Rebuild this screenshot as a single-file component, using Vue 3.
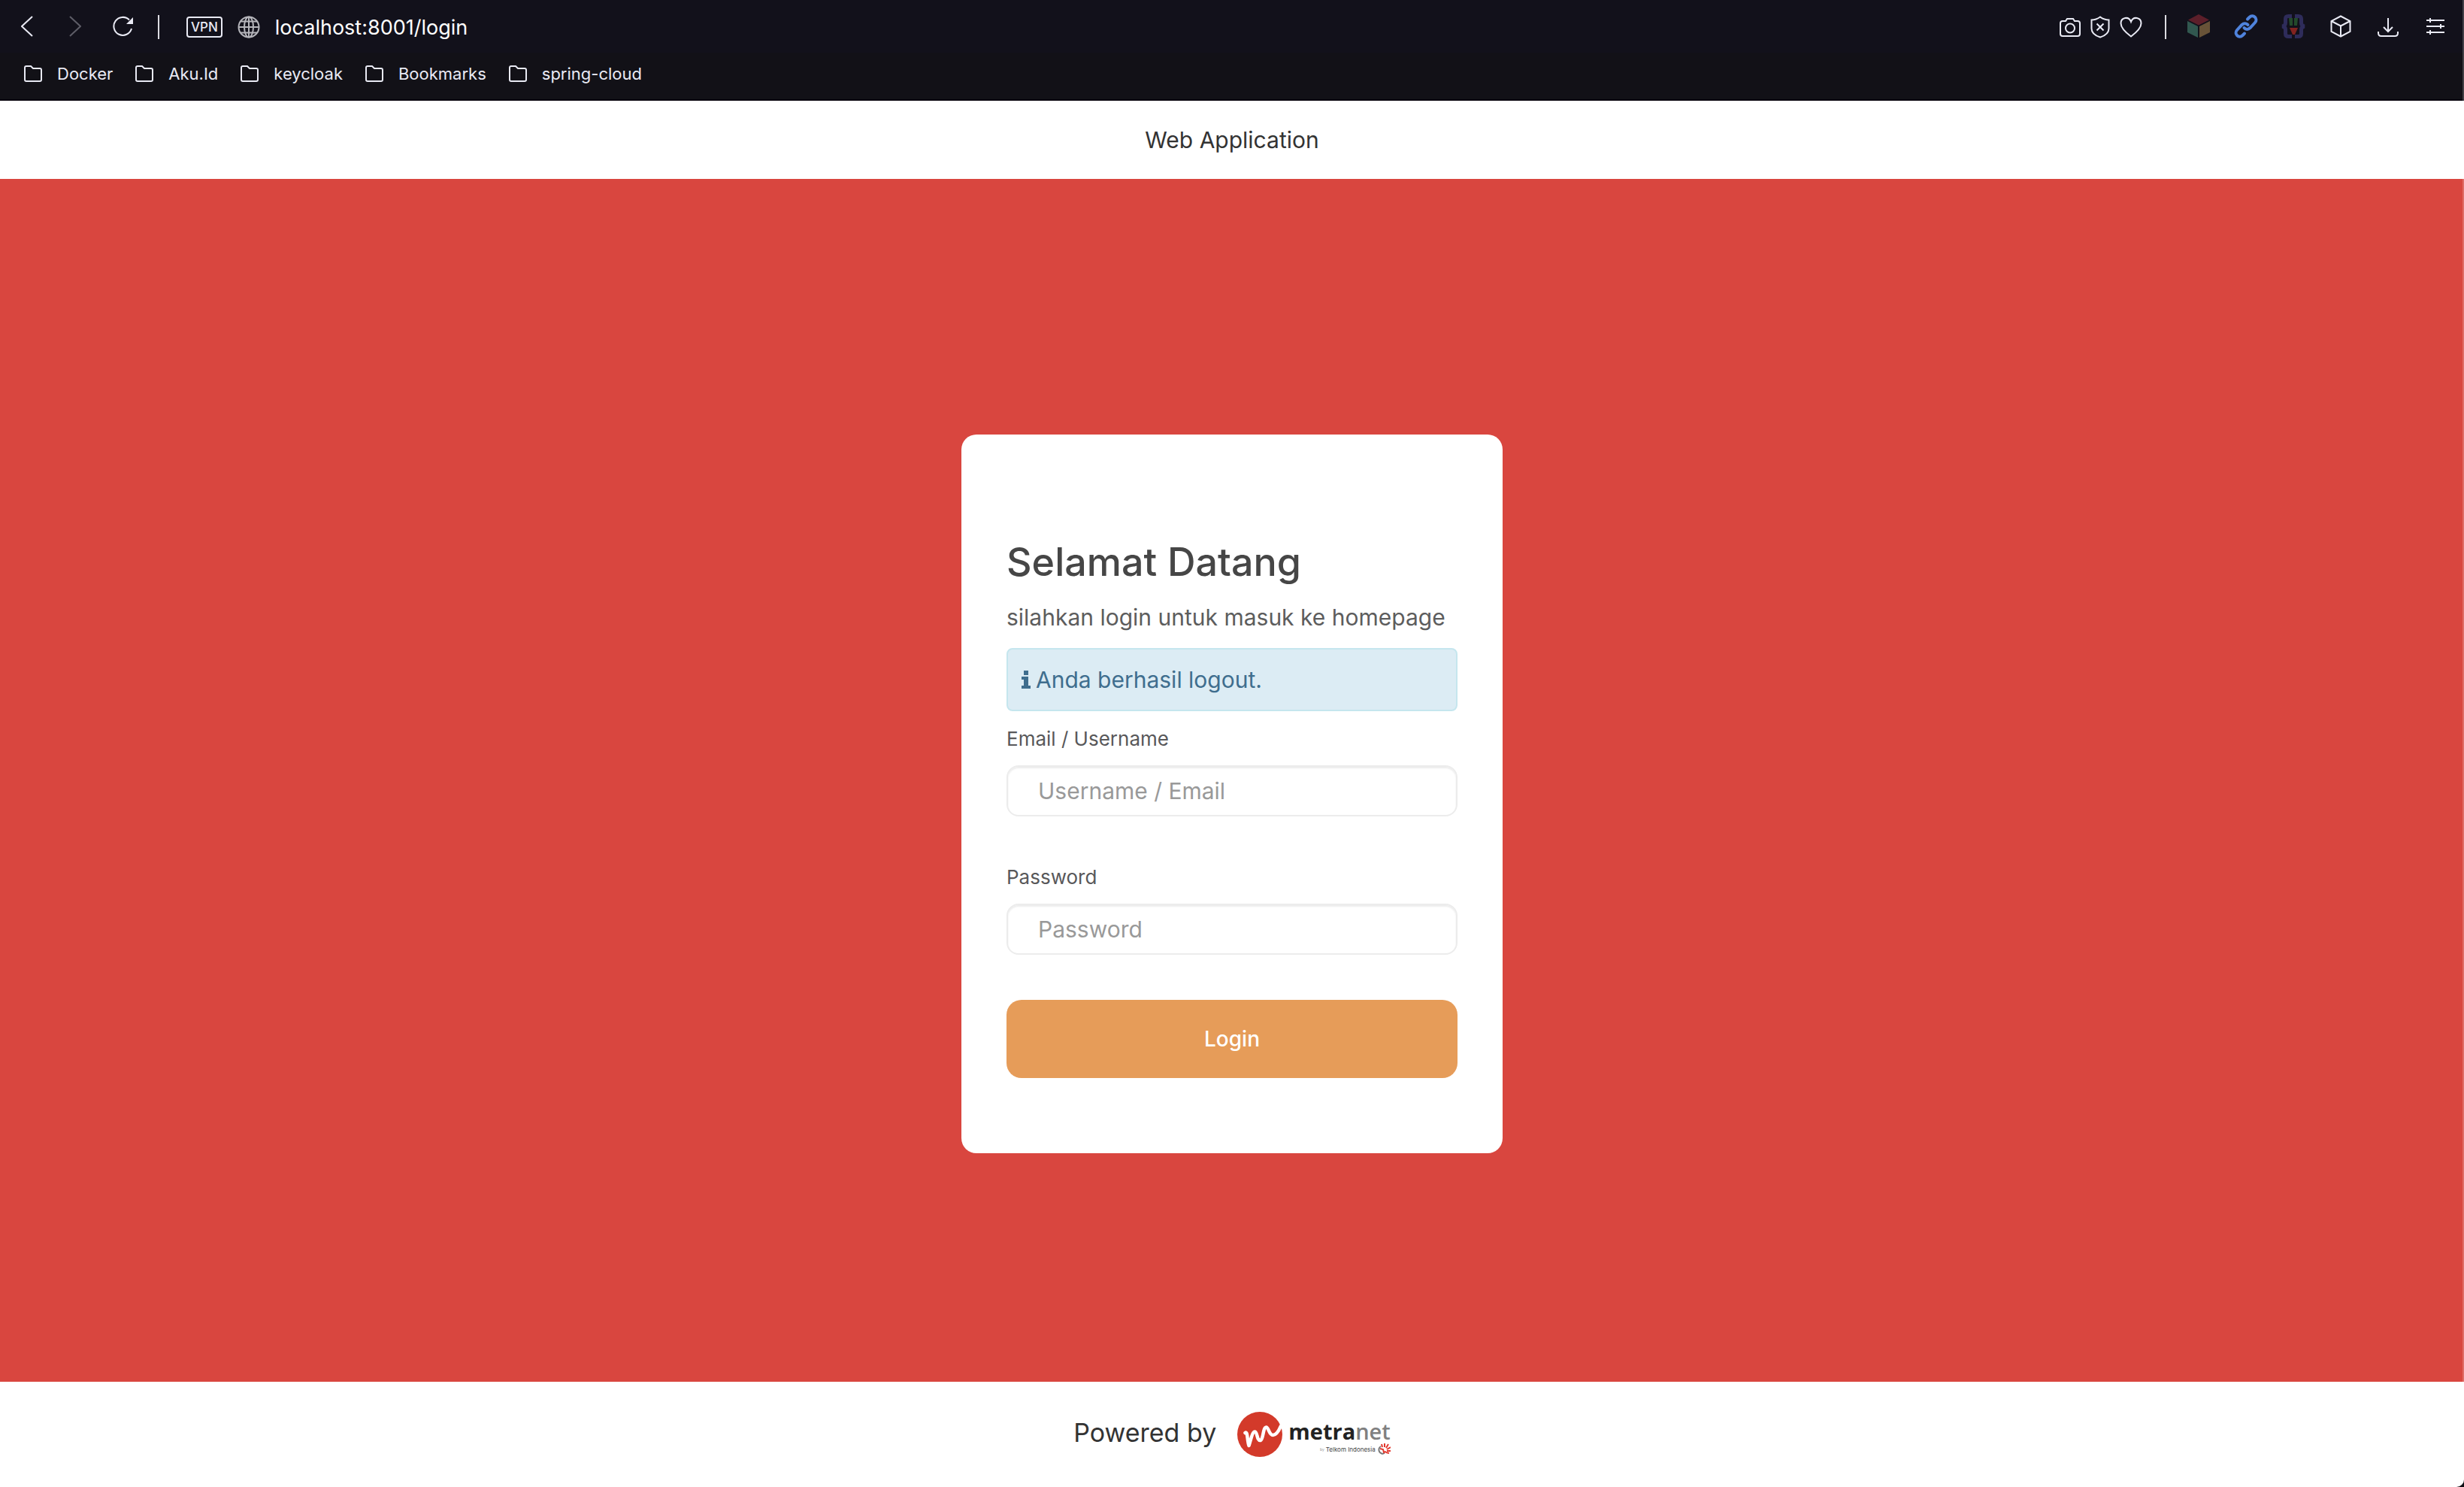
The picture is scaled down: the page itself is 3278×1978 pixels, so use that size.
<script setup>
import { ref } from 'vue'

const bookmarks = ['Docker', 'Aku.Id', 'keycloak', 'Bookmarks', 'spring-cloud']
const url = ref('localhost:8001/login')
const username = ref('')
const password = ref('')
</script>

<template>
  <div class="window">
    <div class="browser">
      <div class="toolbar">
        <div class="nav">
          <button class="icon-btn" aria-label="Back">
            <svg width="16" height="28" viewBox="0 0 16 28"><path d="M15 1L1 14l14 13" /></svg>
          </button>
          <button class="icon-btn dim" aria-label="Forward">
            <svg width="16" height="28" viewBox="0 0 16 28"><path d="M1 1l14 13L1 27" /></svg>
          </button>
          <button class="icon-btn" aria-label="Reload">
            <svg width="28" height="28" viewBox="0 0 28 28"><path d="M25 17A12 12 0 1 1 22 5.500" /><path class="solid" d="M27 2v9h-9z" /></svg>
          </button>
        </div>
        <span class="divider"></span>
        <span class="vpn">VPN</span>
        <svg class="globe" width="30" height="30" viewBox="0 0 30 30">
          <circle cx="15" cy="15" r="13.500" /><ellipse cx="15" cy="15" rx="6" ry="13.500" />
          <path d="M1.500 15h27M4 7.500h22M4 22.500h22M15 1.500v27" />
        </svg>
        <input v-model="url" class="url" type="text" aria-label="Address" />
        <div class="page-tools">
          <button class="icon-btn" aria-label="Snapshot">
            <svg width="28" height="26" viewBox="0 0 28 26"><path d="M4 5h4l2-3h8l2 3h4q3 0 3 3v14q0 3-3 3H4q-3 0-3-3V8q0-3 3-3z" /><circle cx="14" cy="14.500" r="6" /></svg>
          </button>
          <button class="icon-btn" aria-label="Ad blocker">
            <svg width="26" height="30" viewBox="0 0 26 30"><path d="M13 1.500C17 4.500 21 5.500 24.500 5.500V17c0 6-5 9.500-11.500 11.500C6.500 26.500 1.500 23 1.500 17V5.500C5 5.500 9 4.500 13 1.500zM8.500 10.500l9 9m0-9l-9 9" /></svg>
          </button>
          <button class="icon-btn" aria-label="Save page">
            <svg width="30" height="28" viewBox="0 0 30 28"><path d="M15 26.500C9 22 1.500 16 1.500 9c0-8 10.500-10 13.500-2 3-8 13.500-6 13.500 2 0 7-7.500 13-13.500 17.500z" /></svg>
          </button>
        </div>
        <span class="divider tools-divider"></span>
        <div class="extensions">
          <button class="icon-btn" aria-label="Color cube">
            <svg width="32" height="32" viewBox="0 0 32 32"><path fill="#5c1f2a" stroke="none" d="M16 0l14 7.500-14 7L2 7.500z" /><path fill="#31574f" stroke="none" d="M1 9l14 7v15L1 24z" /><path fill="#685338" stroke="none" d="M31 9l-14 7v15l14-7z" /></svg>
          </button>
          <button class="icon-btn" aria-label="Link">
            <svg class="link" width="32" height="32" viewBox="0 0 32 32"><path d="M18 6.500l2.500-2.500c5-5 12 2 7.500 7l-6.500 7c-2.500 2.500-6 2.500-8 0" /><path d="M14 25.500L11.500 28c-5 5-12-2-7.500-7l6.500-7c2.500-2.500 6-2.500 8 0" /></svg>
          </button>
          <button class="icon-btn" aria-label="JSON viewer">
            <svg width="32" height="32" viewBox="0 0 32 32"><path class="brace" d="M14 2.500H9.500Q5.500 2.500 5.500 6v5.500q0 4-4.500 4.500 4.500 .5 4.500 4.500V26q0 3.500 4 3.500H14M18 2.500h4.500q4 0 4 3.500v5.500q0 4 4.500 4.500-4.500 .5-4.500 4.500V26q0 3.500-4 3.500H18" /><path fill="#234a2b" stroke="none" d="M10 5h5v10h-4zM17 5h5l-1 10h-4z" /><path fill="#822320" stroke="none" d="M11 18h11l-4 9h-3z" /></svg>
          </button>
          <button class="icon-btn" aria-label="Extensions">
            <svg width="28" height="30" viewBox="0 0 28 30"><path d="M14 1.500l12.500 6.500v14L14 28.500 1.500 22V8zM1.500 8L14 14.500 26.500 8M14 14.500v14" /></svg>
          </button>
          <button class="icon-btn" aria-label="Downloads">
            <svg width="28" height="28" viewBox="0 0 28 28"><path d="M14 3v18M8 15l6 6 6-6M1 21v2q0 4 4 4h18q4 0 4-4v-2" /></svg>
          </button>
          <button class="icon-btn" aria-label="Easy setup">
            <svg width="26" height="26" viewBox="0 0 26 26"><path d="M1 5h24M1 13h24M1 21h24M6 2v6M20 10v6M6 18v6" /></svg>
          </button>
        </div>
      </div>
      <nav class="bookmarks">
        <a v-for="name in bookmarks" :key="name" href="#" class="bookmark">
          <svg width="24" height="22" viewBox="0 0 24 22"><path d="M3 1h6l3 3h9q2 0 2 2v13q0 2-2 2H3q-2 0-2-2V3q0-2 2-2z" /></svg>
          <span>{{ name }}</span>
        </a>
      </nav>
    </div>

    <header class="site-header">Web Application</header>

    <main class="main">
      <form class="card" @submit.prevent>
        <h1>Selamat Datang</h1>
        <p class="lead">silahkan login untuk masuk ke homepage</p>
        <div class="alert" role="status">
          <svg width="12" height="24" viewBox="0 0 12 24"><path d="M3 0h6v6H3zM0 8h9v12h3v4H0v-4h3v-8H0z" /></svg>
          <span>Anda berhasil logout.</span>
        </div>
        <div class="field">
          <label for="username">Email / Username</label>
          <input id="username" v-model="username" type="text" placeholder="Username / Email" />
        </div>
        <div class="field">
          <label for="password">Password</label>
          <input id="password" v-model="password" type="password" placeholder="Password" />
        </div>
        <button class="login" type="submit">Login</button>
      </form>
    </main>

    <footer class="footer">
      <span class="powered">Powered by</span>
      <div class="logo">
        <svg width="60" height="60" viewBox="0 0 60 60">
          <circle cx="30" cy="30" r="30" fill="#d33a2a" />
          <path d="M10.500 28C14 25 13 38 15.500 45 18 38 20 26 23.500 26.500 27 27 26 39 31 38 35 36 34 21 38.500 20.500 42 20.500 42 31 47.500 31 52 31 55 26 58 19" fill="none" stroke="#fff" stroke-width="4.500" stroke-linecap="round" stroke-linejoin="round" />
        </svg>
        <div class="wordmark">
          <div class="brand">metra<span>net</span></div>
          <div class="byline">
            <small>by</small><span>Telkom Indonesia</span>
            <svg width="18" height="16" viewBox="0 0 18 16"><path d="M5 4a5 5 0 1 0 5 9" fill="none" stroke="#777" stroke-width="2" /><path d="M4 7l4 1 1 4 3-1M7 5L6 1M10 5V0M12 6l3-5M13 8l5-3M13 10h5M12 12l4 1" fill="none" stroke="#e2382e" stroke-width="2" /></svg>
          </div>
        </div>
      </div>
    </footer>
  </div>
</template>

<style>
body {
  margin: 0;
  background: #0e0e14;
}
</style>

<style scoped>
* {
  box-sizing: border-box;
}
.window {
  position: relative;
  display: flex;
  flex-direction: column;
  min-height: 100vh;
  overflow: hidden;
  border-bottom-right-radius: 10px;
  font-family: Inter, "Open Sans", sans-serif;
  color: #333;
  background: #fff;
}
/* light hairline along the window's right edge */
.window::after {
  content: "";
  position: absolute;
  top: 0;
  right: 0;
  bottom: 0;
  width: 2px;
  background: rgba(255, 255, 255, 0.2);
}
button,
input {
  font-family: inherit;
}
svg {
  display: block;
  flex: none;
}
.browser {
  height: 134px;
  border-bottom: 2px solid #08040e;
  background: #121117;
  color: #e9eaf4;
}
.browser svg {
  fill: none;
  stroke: #e9eaf4;
  stroke-width: 2;
}
.toolbar {
  display: flex;
  align-items: center;
  height: 70px;
  padding: 2px 22px 0 28px;
  background: #12111b;
}
.icon-btn {
  display: flex;
  justify-content: center;
  padding: 0;
  border: 0;
  background: none;
}
.dim {
  opacity: 0.35;
}
.nav {
  display: flex;
  align-items: center;
  gap: 42px;
  padding-bottom: 2px;
}
.nav .icon-btn:first-child {
  margin-right: 6px;
}
.toolbar .solid {
  fill: #e9eaf4;
  stroke: none;
}
.divider {
  width: 2px;
  height: 32px;
  margin: 0 36px 0 32px;
  background: #dcdce2;
}
.tools-divider {
  margin: 0 27px 0 30px;
}
.vpn {
  height: 28px;
  padding: 0 4px;
  border: 2px solid #e9eaf4;
  border-radius: 4px;
  font-size: 17px;
  line-height: 24px;
  font-weight: 500;
}
.toolbar .globe {
  margin: 0 20px;
  stroke: #b5b5bb;
}
.url {
  flex: 1;
  min-width: 0;
  padding: 2px 0 0;
  border: 0;
  background: none;
  color: #fff;
  font-size: 27px;
  line-height: 36px;
}
.page-tools {
  display: flex;
  align-items: center;
  gap: 13px;
}
.extensions {
  display: flex;
  align-items: center;
  gap: 31px;
  padding-bottom: 2px;
}
.extensions .icon-btn {
  width: 32px;
}
.toolbar .link {
  stroke: #4f83dc;
  stroke-width: 4;
  stroke-linecap: round;
}
.toolbar .brace {
  stroke: #2e2c5a;
  stroke-width: 5;
}
.bookmarks {
  display: flex;
  gap: 30px;
  padding: 12px 32px;
}
.bookmark {
  display: flex;
  align-items: center;
  gap: 20px;
  color: inherit;
  font-size: 22px;
  line-height: 32px;
  text-decoration: none;
}
.site-header {
  height: 104px;
  font-size: 30px;
  line-height: 104px;
  text-align: center;
}
.main {
  flex: 1;
  padding: 340px 20px 304px;
  background: #d9463f;
}
.card {
  max-width: 720px;
  margin: 0 auto;
  padding: 140px 60px 100px;
  border-radius: 20px;
  background: #fff;
}
h1 {
  margin: 0 0 22px;
  color: #464646;
  font-size: 52px;
  line-height: 60px;
  font-weight: 500;
}
.lead {
  margin: 0 0 20px;
  color: #5d5d5d;
  font-size: 30px;
  line-height: 42px;
  white-space: nowrap;
}
.alert {
  display: flex;
  align-items: center;
  gap: 7px;
  height: 84px;
  margin-bottom: 20px;
  padding: 0 18px;
  border: 2px solid #c5e6ee;
  border-radius: 8px;
  background: #dcecf4;
  color: #3f6e8e;
  font-size: 30px;
}
.alert svg {
  fill: #3f6e8e;
}
.field {
  margin-bottom: 64px;
}
.field + .login {
  margin-top: -4px;
}
label {
  display: block;
  margin-bottom: 18px;
  color: #58585a;
  font-size: 26px;
  line-height: 34px;
}
.field input {
  display: block;
  width: 100%;
  height: 68px;
  padding: 0 40px;
  border: 2px solid #ececec;
  border-radius: 16px;
  background: #fff;
  box-shadow: inset 0 2px 2px #ececec;
  color: #555;
  font-size: 30px;
}
.field input::placeholder {
  color: #999;
}
.login {
  display: block;
  width: 100%;
  height: 104px;
  border: 0;
  border-radius: 20px;
  background: #e69c59;
  color: #fff;
  font-size: 28px;
  font-weight: 500;
}
.footer {
  display: flex;
  justify-content: center;
  align-items: center;
  gap: 28px;
  height: 140px;
  font-size: 34px;
}
.powered {
  padding-bottom: 6px;
}
.logo {
  display: flex;
  gap: 8px;
}
.wordmark {
  padding-top: 10px;
}
.brand {
  color: #222;
  font-family: "Open Sans", sans-serif;
  font-size: 29px;
  line-height: 32px;
  font-weight: 700;
}
.brand span {
  color: #808080;
  font-weight: 600;
}
.byline {
  display: flex;
  justify-content: flex-end;
  align-items: center;
  gap: 2px;
  color: #444;
  font-size: 8px;
  line-height: 16px;
}
.byline small {
  color: #999;
  font-size: 5px;
}
</style>
